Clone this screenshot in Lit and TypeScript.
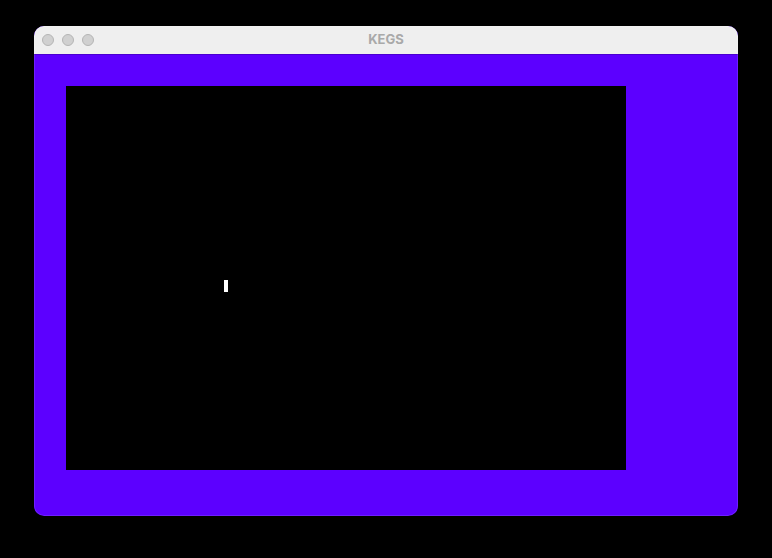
import { LitElement, html, css } from "lit";
import { customElement, property } from "lit/decorators.js";

@customElement("emulator-screen")
class EmulatorScreen extends LitElement {
  static styles = css`
    :host {
      display: flex;
      flex: 1;
    }
    .display {
      position: relative;
      flex: 1;
      background: #000;
    }
    .cursor {
      position: absolute;
      left: 158px;
      top: 194px;
      width: 4px;
      height: 12px;
      background: #fff;
    }
  `;

  render() {
    return html`<div class="display"><span class="cursor"></span></div>`;
  }
}

@customElement("app-window")
class AppWindow extends LitElement {
  @property() heading = "";

  static styles = css`
    :host {
      position: relative;
      flex: 1;
      display: flex;
      flex-direction: column;
      overflow: hidden;
      border-radius: 10px;
      background: #5c00ff;
    }
    /* Thin light edge drawn over the window's content. */
    :host::after {
      content: "";
      position: absolute;
      inset: 0;
      border-radius: 10px;
      box-shadow: inset 0 0 0 1px rgba(255, 255, 255, 0.12);
      pointer-events: none;
    }
    .titlebar {
      display: grid;
      grid-template-columns: 1fr auto 1fr;
      align-items: center;
      height: 28px;
      padding: 0 8px;
      background: #efefef;
      box-shadow: 0 1px 0 #4b00d0;
    }
    .controls {
      display: flex;
      gap: 8px;
    }
    .control {
      appearance: none;
      box-sizing: border-box;
      width: 12px;
      height: 12px;
      padding: 0;
      border: 1px solid #b4b4b4;
      border-radius: 50%;
      background: #d0d0d0;
    }
    .title {
      margin: 0;
      padding-bottom: 2px;
      font: 700 13px/16px Inter, "Liberation Sans", sans-serif;
      color: #a9a9a9;
    }
    .content {
      flex: 1;
      display: flex;
      padding: 32px 112px 46px 32px;
    }
  `;

  render() {
    return html`
      <header class="titlebar">
        <div class="controls">
          ${["Close", "Minimize", "Zoom"].map(
            (name) => html`<button class="control" type="button" aria-label=${name}></button>`
          )}
        </div>
        <h1 class="title">${this.heading}</h1>
      </header>
      <main class="content"><slot></slot></main>
    `;
  }
}

@customElement("app-root")
class AppRoot extends LitElement {
  static styles = css`
    :host {
      display: flex;
      box-sizing: border-box;
      min-height: 100vh;
      padding: 26px 34px 42px;
      background: #000;
    }
  `;

  render() {
    return html`
      <app-window heading="KEGS">
        <emulator-screen></emulator-screen>
      </app-window>
    `;
  }
}
